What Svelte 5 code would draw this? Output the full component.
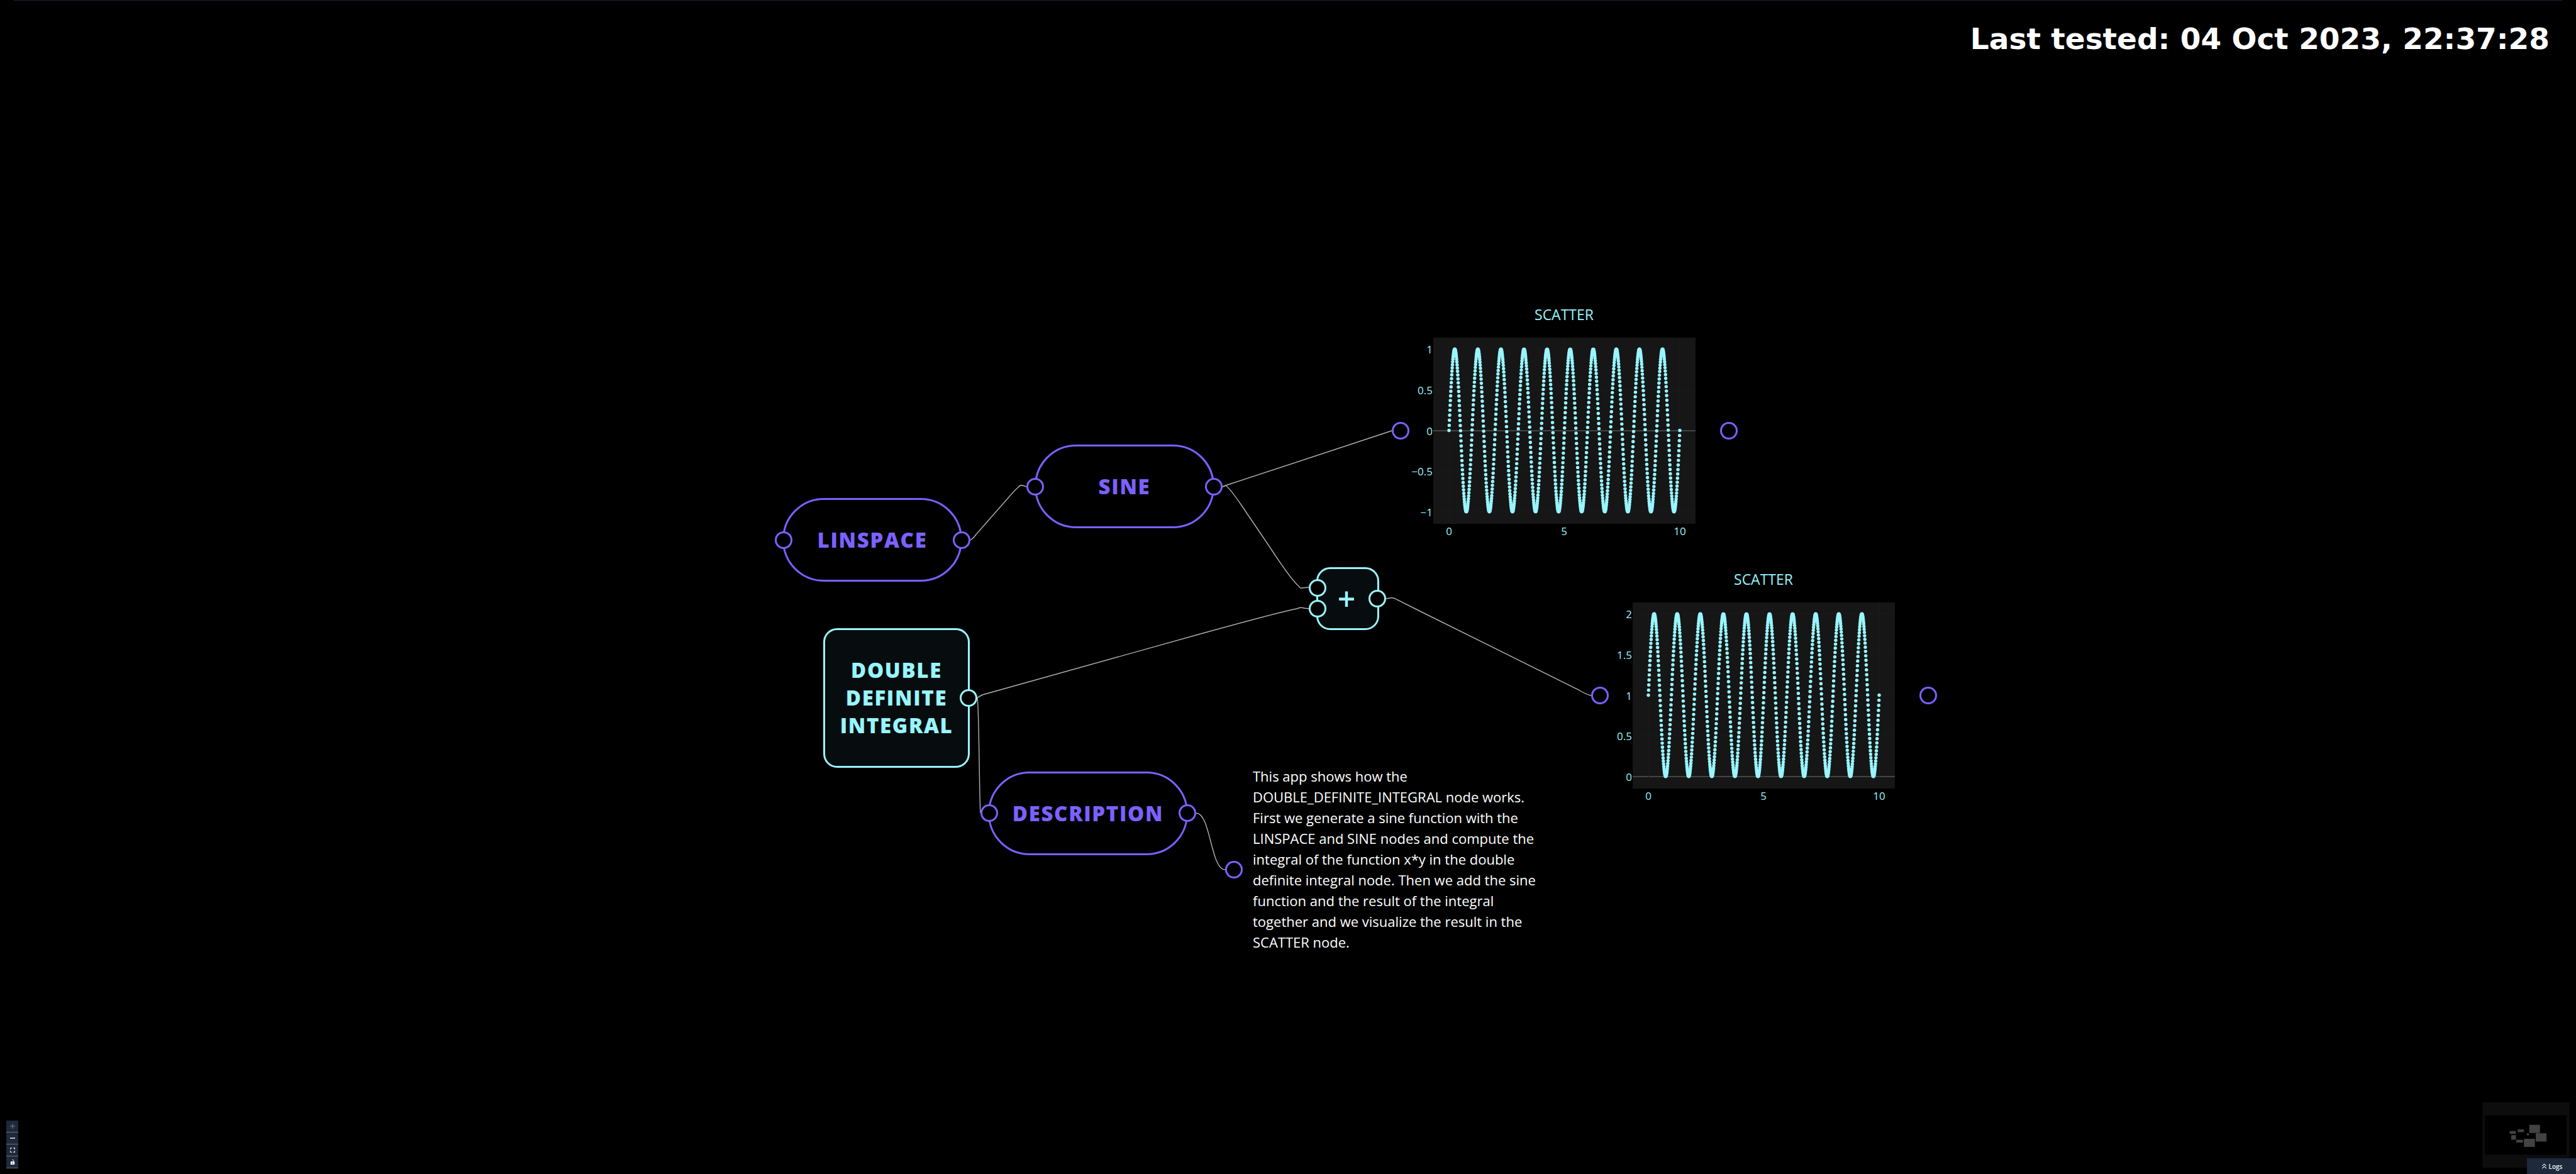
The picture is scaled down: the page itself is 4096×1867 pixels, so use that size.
<script lang="ts">
  type Handle = { x: number; y: number; tone: string };
  type Plot = { x: number; y: number; ticks: string[]; zero: number };

  const nodes = [
    { id: 'linspace', lines: ['LINSPACE'], tone: 'violet pill' },
    { id: 'sine', lines: ['SINE'], tone: 'violet pill' },
    { id: 'integral', lines: ['DOUBLE', 'DEFINITE', 'INTEGRAL'], tone: 'cyan card' },
    { id: 'description', lines: ['DESCRIPTION'], tone: 'violet pill' },
    { id: 'add', lines: ['+'], tone: 'cyan card' }
  ];

  const handles: Handle[] = [
    { x: 1246, y: 859, tone: 'violet' },
    { x: 1529, y: 859, tone: 'violet' },
    { x: 1646, y: 774, tone: 'violet' },
    { x: 1930, y: 774, tone: 'violet' },
    { x: 1540, y: 1110, tone: 'cyan' },
    { x: 1573, y: 1293, tone: 'violet' },
    { x: 1888, y: 1293, tone: 'violet' },
    { x: 2095, y: 935, tone: 'cyan' },
    { x: 2095, y: 968, tone: 'cyan' },
    { x: 2190, y: 952, tone: 'cyan' },
    { x: 2227, y: 685, tone: 'violet' },
    { x: 2749, y: 685, tone: 'violet' },
    { x: 2544, y: 1106, tone: 'violet' },
    { x: 3066, y: 1106, tone: 'violet' },
    { x: 1962, y: 1383, tone: 'violet' }
  ];

  const edges = [
    'M1543 859 Q1548 856 1552 850 L1602 793 Q1613 780 1619 775 Q1622 771 1626 772 L1632 774',
    'M1944 774 L1952 771 L2204 688 L2213 685',
    'M1944 774 L1949 772 Q1956 777 1975 805 L2017 867 C2036 896 2056 925 2065 932 Q2067 936 2070 935 L2081 934',
    'M1554 1110 Q1556 1108 1562 1105 L1909 1008 C1960 994 2040 972 2062 968 Q2068 965 2073 967 L2081 968',
    'M1554 1110 C1557 1130 1557 1270 1559 1293',
    'M1902 1293 C1925 1293 1925 1383 1948 1383',
    'M2204 952 L2211 951 Q2216 950 2222 954 L2256 971 L2510 1097 Q2523 1105 2530 1106'
  ];

  const plots: Plot[] = [
    { x: 2230, y: 470, ticks: ['1', '0.5', '0', '−0.5', '−1'], zero: 2 },
    { x: 2547, y: 891, ticks: ['2', '1.5', '1', '0.5', '0'], zero: 4 }
  ];

  const rowY = [85, 150, 215, 279, 344];
  const colX = [74, 257, 441];
  const points = Array.from({ length: 1000 }, (_, i) => {
    const t = (i * 10) / 999;
    return { x: 74 + t * 36.7, y: 214.5 - Math.sin(2 * Math.PI * t) * 129.2 };
  });

  const mini = [
    [188, 198, 42, 19], [243, 186, 42, 19], [198, 226, 33, 31], [233, 258, 46, 19],
    [305, 213, 15, 14], [323, 155, 73, 56], [367, 213, 74, 57], [286, 251, 75, 56]
  ];
</script>

<main class="flow">
  <div class="topline"></div>
  <header class="stamp">Last tested: 04 Oct 2023, 22:37:28</header>

  <svg class="edges" aria-hidden="true">
    {#each edges as d}<path {d} />{/each}
  </svg>

  {#each nodes as n}
    <div class="node {n.tone} {n.id}">
      {#each n.lines as line}<span>{line}</span>{/each}
    </div>
  {/each}

  {#each plots as p}
    <svg class="plot" style="left: {p.x}px; top: {p.y}px" width="520" height="400" role="img" aria-label="Scatter plot">
      <text class="title" x="257" y="39" text-anchor="middle">SCATTER</text>
      <rect x="49" y="67" width="417" height="296" fill="#161616" />
      {#each rowY as y, i}
        <line x1="49" x2="466" y1={y} y2={y} class={i === p.zero ? 'zero' : 'grid'} />
        <text class="tick" x="48" y={y + 7} text-anchor="end">{p.ticks[i]}</text>
      {/each}
      {#each colX as x, i}
        <line x1={x} x2={x} y1="67" y2="363" class="grid" />
        <text class="tick" {x} y="381" text-anchor="middle">{i * 5}</text>
      {/each}
      {#each points as q}<circle cx={q.x} cy={q.y} r="2.7" />{/each}
    </svg>
  {/each}

  <p class="note">
    This app shows how the DOUBLE_DEFINITE_INTEGRAL node works. First we generate a sine function
    with the LINSPACE and SINE nodes and compute the integral of the function x*y in the double
    definite integral node. Then we add the sine function and the result of the integral together
    and we visualize the result in the SCATTER node.
  </p>

  {#each handles as h}
    <i class="handle {h.tone}" style="left: {h.x}px; top: {h.y}px"></i>
  {/each}

  <div class="controls">
    <button aria-label="Zoom in" disabled>
      <svg viewBox="0 0 12 12"><path d="M6 0v12M0 6h12" stroke="currentColor" stroke-width="1.4" /></svg>
    </button>
    <button aria-label="Zoom out">
      <svg viewBox="0 0 12 12"><path d="M0 6h12" stroke="currentColor" stroke-width="2" /></svg>
    </button>
    <button aria-label="Fit view">
      <svg viewBox="0 0 12 12"><path d="M1 4V2Q1 1 2 1H4M8 1h2Q11 1 11 2V4M11 8v2Q11 11 10 11H8M4 11H2Q1 11 1 10V8" fill="none" stroke="currentColor" stroke-width="1.7" /></svg>
    </button>
    <button aria-label="Toggle interactivity">
      <svg viewBox="0 0 12 12"><path d="M5 1Q8.500-1 8.500 3V5" fill="none" stroke="currentColor" stroke-width="1.3" /><path fill-rule="evenodd" fill="currentColor" d="M2.500 4.500h7q1.300 0 1.300 1.300v4.900q0 1.300-1.300 1.300h-7q-1.300 0-1.300-1.300v-4.900q0-1.300 1.300-1.300zM6 7.100a1.200 1.200 0 1 0 .01 0z" /></svg>
    </button>
  </div>

  <svg class="minimap" viewBox="0 0 600 450" aria-label="Mini map" role="img">
    <rect width="600" height="450" fill="#0d0d0d" />
    <rect x="18" y="89" width="561" height="271" fill="#000" />
    {#each mini as m}<rect x={m[0]} y={m[1]} width={m[2]} height={m[3]} fill="#424242" />{/each}
  </svg>

  <button class="logs">
    <svg viewBox="0 0 10 12" aria-hidden="true"><path d="M0.500 5.500L5 1.200L9.500 5.500M0.500 11L5 6.700L9.500 11" fill="none" stroke="currentColor" stroke-width="1.500" /></svg>
    Logs
  </button>
</main>

<style>
  :global(body) {
    margin: 0;
    background: #000;
  }
  .flow {
    position: relative;
    height: 100vh;
    overflow: hidden;
    background: #000;
    font-family: 'Open Sans', 'Noto Sans', sans-serif;
  }
  .topline {
    height: 1px;
    margin: 0 22px;
    background: #1b222c;
  }
  .stamp {
    padding: 33px 42px 0 0;
    text-align: right;
    color: #fff;
    font: bold 47px/56px 'DejaVu Sans', sans-serif;
  }
  .edges {
    position: absolute;
    inset: 0;
    width: 100%;
    height: 100%;
  }
  .edges path {
    fill: none;
    stroke: #b1b1b1;
    stroke-width: 1.4;
  }
  .node {
    position: absolute;
    box-sizing: border-box;
    display: flex;
    flex-direction: column;
    align-items: center;
    justify-content: center;
    border: 3px solid;
    font-size: 33px;
    font-weight: 800;
    line-height: 44px;
    letter-spacing: 0.05em;
  }
  .violet {
    color: #7b61ff;
  }
  .cyan {
    color: #99f5ff;
  }
  .pill {
    width: 286px;
    height: 133px;
    border-radius: 66px;
  }
  .card {
    border-radius: 22px;
    background: #070d0e;
  }
  .linspace {
    left: 1244px;
    top: 792px;
  }
  .sine {
    left: 1645px;
    top: 707px;
  }
  .integral {
    left: 1309px;
    top: 999px;
    width: 233px;
    height: 222px;
  }
  .description {
    left: 1571px;
    top: 1227px;
    width: 318px;
  }
  .add {
    left: 2093px;
    top: 902px;
    width: 100px;
    height: 100px;
    padding-right: 4px;
    font-size: 50px;
    font-weight: 600;
    letter-spacing: 0;
  }
  .handle {
    position: absolute;
    box-sizing: border-box;
    width: 28px;
    height: 28px;
    margin: -14px 0 0 -14px;
    border: 3px solid;
    border-radius: 50%;
    background: #000;
  }
  .plot {
    position: absolute;
    fill: #99f5ff;
  }
  .title {
    font-size: 23px;
  }
  .tick {
    font-size: 17px;
  }
  .grid {
    stroke: #1b1b1b;
    stroke-width: 1;
  }
  .zero {
    stroke: #444;
    stroke-width: 2;
  }
  .note {
    position: absolute;
    left: 1992px;
    top: 1218px;
    width: 464px;
    margin: 0;
    color: #fff;
    font-size: 22px;
    line-height: 33px;
  }
  .controls {
    position: absolute;
    left: 10px;
    bottom: 9px;
    display: flex;
    flex-direction: column;
  }
  .controls button {
    box-sizing: border-box;
    display: flex;
    align-items: center;
    justify-content: center;
    width: 19px;
    height: 19px;
    padding: 0;
    border: 0;
    border-bottom: 1px solid #6b6f77;
    background: #1e293b;
    color: #fff;
  }
  .controls button:disabled {
    color: #848b96;
  }
  .controls svg {
    width: 8px;
    height: 8px;
  }
  .minimap {
    position: absolute;
    right: 10px;
    bottom: 10px;
    width: 139px;
    height: 104px;
  }
  .logs {
    position: absolute;
    right: 0;
    bottom: 0;
    display: flex;
    align-items: center;
    justify-content: center;
    gap: 4px;
    width: 78px;
    height: 25px;
    padding: 0 0 0 2px;
    border: 0;
    background: #1e293b;
    color: #f1f5f9;
    font: 600 10px/14px 'Open Sans', 'Noto Sans', sans-serif;
  }
  .logs svg {
    width: 7px;
    height: 9px;
  }
</style>
